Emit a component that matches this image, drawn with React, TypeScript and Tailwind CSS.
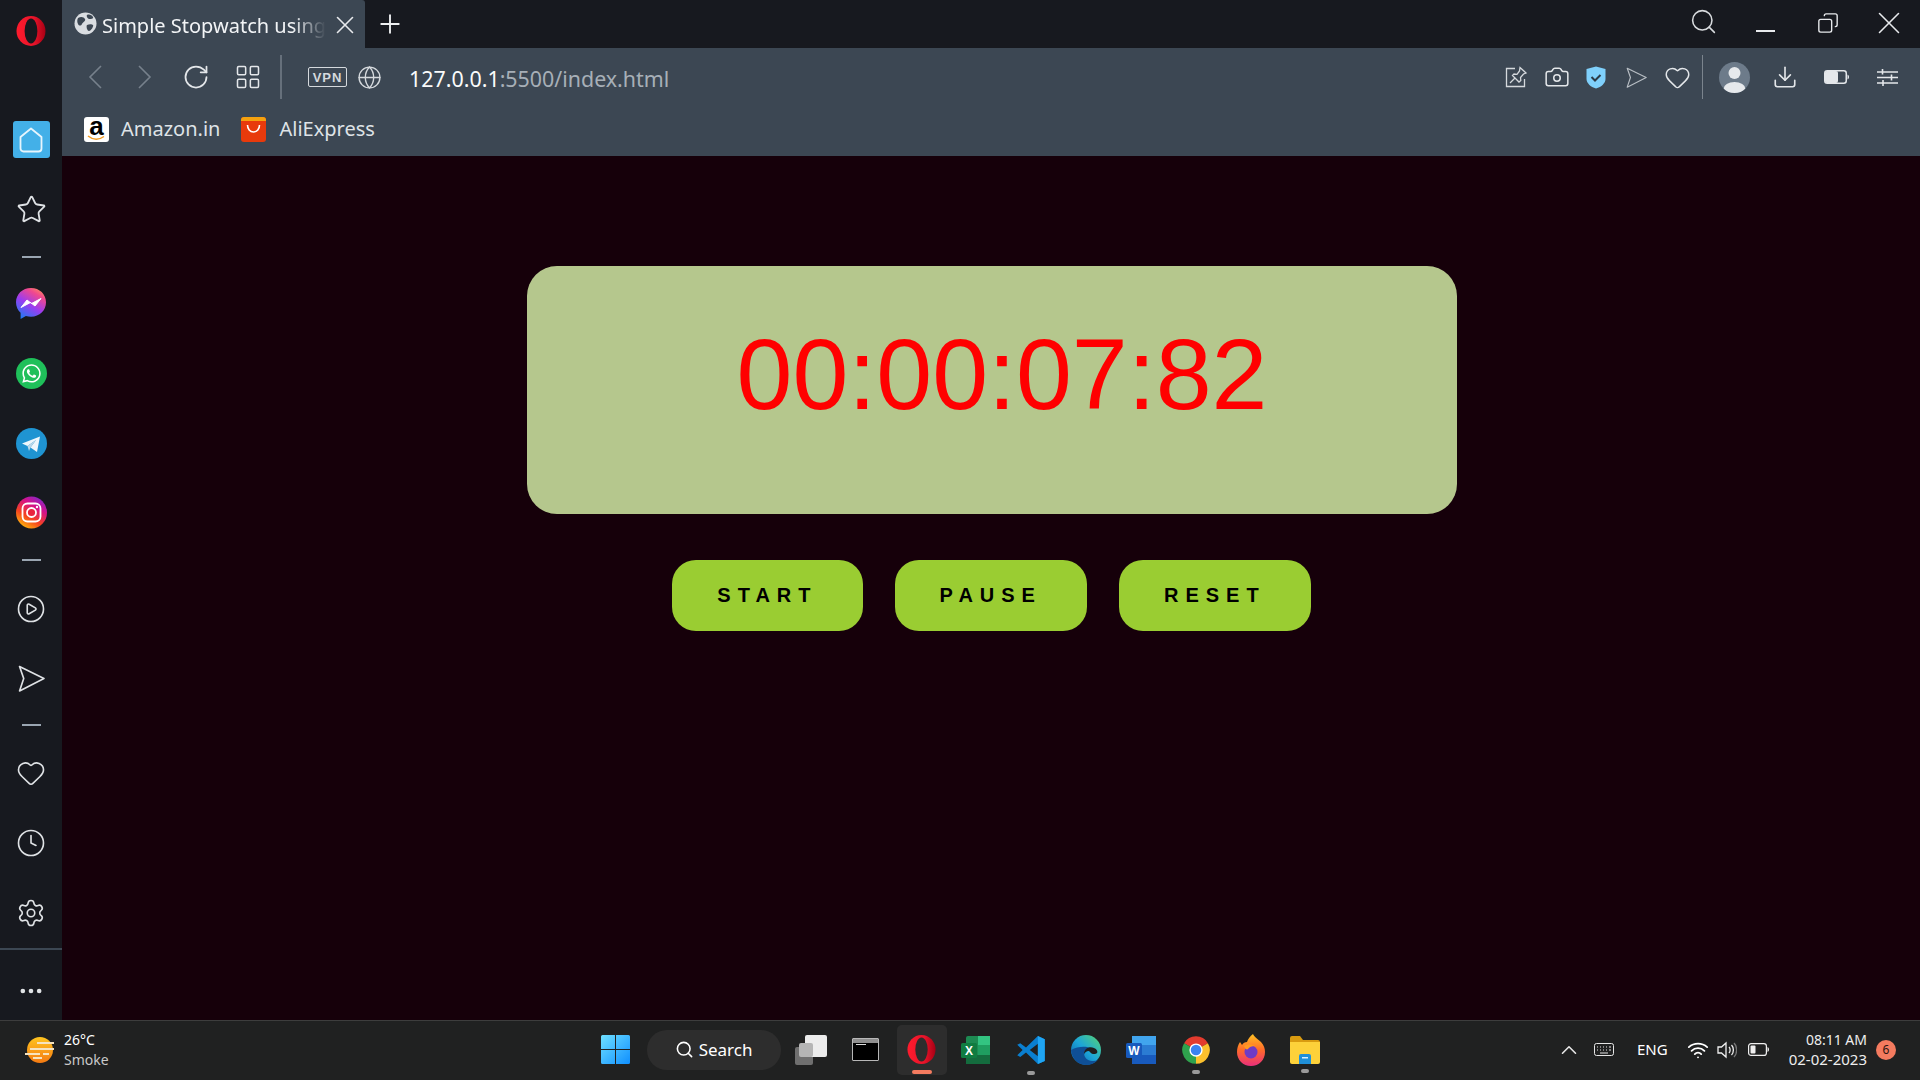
import {
  Camera,
  ChevronUp,
  CirclePlay,
  Clock,
  Copy,
  Download,
  Ellipsis,
  Globe,
  Heart,
  LayoutGrid,
  Plus,
  RotateCw,
  Search,
  Settings,
  Star,
  Wifi,
  X,
} from "lucide-react";
import { FaWhatsapp } from "react-icons/fa";

function OperaLogo({ size = 30, hole = "#17191f" }: { size?: number; hole?: string }) {
  return (
    <svg width={size} height={size} viewBox="0 0 30 30">
      <defs>
        <linearGradient id={`op-${size}`} x1="0" x2="1" y1="0" y2="0">
          <stop offset="0" stopColor="#ff1b2d" />
          <stop offset="0.6" stopColor="#e8142a" />
          <stop offset="1" stopColor="#a70014" />
        </linearGradient>
      </defs>
      <ellipse cx="15" cy="15" rx="14.5" ry="15" fill={`url(#op-${size})`} />
      <ellipse cx="15" cy="15" rx="6.4" ry="12.4" fill={hole} />
    </svg>
  );
}

function SendOutline({ size = 26, color = "#d8dce0", stroke = 1.6 }: { size?: number; color?: string; stroke?: number }) {
  return (
    <svg width={size} height={size} viewBox="0 0 26 26" fill="none" stroke={color} strokeWidth={stroke} strokeLinejoin="round">
      <path d="M1.5 1.5 25 13 1.5 25 5.5 13z" />
    </svg>
  );
}

function Separator() {
  return <div className="h-[2px] w-[19px] shrink-0 bg-[#9aa5b1]" />;
}

function Messenger() {
  return (
    <svg width="32" height="33" viewBox="0 0 32 33">
      <defs>
        <linearGradient id="msg" x1="0.2" x2="0.8" y1="1" y2="0">
          <stop offset="0" stopColor="#1c7cf5" />
          <stop offset="0.45" stopColor="#9b3cf0" />
          <stop offset="0.8" stopColor="#f0488f" />
          <stop offset="1" stopColor="#fd8a5e" />
        </linearGradient>
      </defs>
      <path d="M16 1C7.4 1 1 7.2 1 15.3c0 4.3 1.8 8 4.6 10.500V32l5.300-2.900C12.500 29.600 14.200 29.800 16 29.800c8.600 0 15-6.400 15-14.500S24.600 1 16 1z" fill="url(#msg)" />
      <path d="M6 20.500 12 13l4.500 3.500L26 11.500 20 19l-4.500-3.500z" fill="#fff" stroke="#fff" strokeWidth="1" strokeLinejoin="round" />
    </svg>
  );
}

function WhatsApp() {
  return (
    <div className="flex size-[31px] items-center justify-center rounded-full bg-[#1fc05a]">
      <FaWhatsapp className="size-[21px] text-white" />
    </div>
  );
}

function Telegram() {
  return (
    <svg width="31" height="31" viewBox="0 0 31 31">
      <circle cx="15.500" cy="15.500" r="15.500" fill="#1f94d2" />
      <path d="M6 15.500 24 8.500 21 24 14.500 19.500 20 12 11.500 18z" fill="#eef7fc" />
      <path d="M11.500 18 20 12 14.500 19.500 13 23z" fill="#bcd9ea" />
    </svg>
  );
}

function Instagram() {
  return (
    <svg width="31" height="33" viewBox="0 0 31 33">
      <defs>
        <linearGradient id="ig" x1="0.2" x2="0.8" y1="1" y2="0">
          <stop offset="0" stopColor="#fdc30a" />
          <stop offset="0.35" stopColor="#f5431f" />
          <stop offset="0.7" stopColor="#d4118c" />
          <stop offset="1" stopColor="#7b2bd0" />
        </linearGradient>
      </defs>
      <ellipse cx="15.500" cy="16.500" rx="15.500" ry="16" fill="url(#ig)" />
      <rect x="6.500" y="7.500" width="18" height="18" rx="5" fill="none" stroke="#fff" strokeWidth="1.800" />
      <circle cx="15.500" cy="16.500" r="4.500" fill="#e9243f" stroke="#fff" strokeWidth="1.800" />
      <circle cx="21" cy="11" r="1.200" fill="#fff" />
    </svg>
  );
}

function Sidebar() {
  const icon = "size-[30px] text-[#dfe2e5]";
  return (
    <aside className="flex w-[62px] shrink-0 flex-col items-center bg-[#17191f]">
      <div className="mt-4">
        <OperaLogo />
      </div>
      <div className="mt-[75px] flex size-[37px] items-center justify-center rounded-[3px] bg-[#43b0e8]">
        <svg width="24" height="26" viewBox="0 0 24 26" fill="none" stroke="#e6f5fd" strokeWidth="1.800" strokeLinejoin="round">
          <path d="M12 1.500 22.500 10v11.500a3 3 0 0 1-3 3h-15a3 3 0 0 1-3-3V10z" />
        </svg>
      </div>
      <div className="mt-[33px] flex size-[37px] items-center justify-center">
        <Star className="size-[31px] text-[#dfe2e5]" strokeWidth={1.400} />
      </div>
      <div className="mt-[28px]">
        <Separator />
      </div>
      <div className="mt-[27px] flex size-[37px] items-center justify-center">
        <Messenger />
      </div>
      <div className="mt-[33px] flex size-[37px] items-center justify-center">
        <WhatsApp />
      </div>
      <div className="mt-[33px] flex size-[37px] items-center justify-center">
        <Telegram />
      </div>
      <div className="mt-[32px] flex size-[37px] items-center justify-center">
        <Instagram />
      </div>
      <div className="mt-[28px]">
        <Separator />
      </div>
      <div className="mt-[29px] flex size-[37px] items-center justify-center">
        <CirclePlay className={icon} strokeWidth={1.300} />
      </div>
      <div className="mt-[33px] flex size-[37px] items-center justify-center">
        <SendOutline size={27} color="#dfe2e5" />
      </div>
      <div className="mt-[27px]">
        <Separator />
      </div>
      <div className="mt-[28px] flex size-[37px] items-center justify-center">
        <Heart className={icon} strokeWidth={1.300} />
      </div>
      <div className="mt-[33px] flex size-[37px] items-center justify-center">
        <Clock className={icon} strokeWidth={1.300} />
      </div>
      <div className="mt-[33px] flex size-[37px] items-center justify-center">
        <Settings className={icon} strokeWidth={1.300} />
      </div>
      <div className="mt-[17px] h-[2px] w-full bg-[#3c4753]" />
      <div className="mt-[27px] flex items-center justify-center">
        <Ellipsis className="size-7 text-[#dfe2e5]" />
      </div>
    </aside>
  );
}

function TitleBar() {
  return (
    <div className="flex h-12 shrink-0 items-center bg-[#17191f]">
      <div className="relative flex h-full w-[303px] items-center rounded-tr-[3px] bg-[#3c4753] pl-[12px]">
        <svg className="-mt-[2px]" width="23" height="23" viewBox="0 0 23 23">
          <circle cx="11.500" cy="11.500" r="11" fill="#d9dde1" />
          <path d="M4 6c3-2 6-1 7 1s-2 3-3 5-3 2-4 0-1-4 0-6zM13 13c2-1 5-1 6 0s-2 6-4 6-3-5-2-6zM13 3c2-1 5 0 6 2s-3 2-4 2-3-3-2-4z" fill="#3c4753" />
        </svg>
        <span className="ml-[5px] mt-[3px] w-[224px] whitespace-nowrap text-[20px] text-[#f2f4f6] [mask-image:linear-gradient(to_right,black_85%,transparent)]">
          Simple Stopwatch using
        </span>
        <X className="absolute left-[268px] top-[10px] size-[30px] text-[#e8eaed]" strokeWidth={1.300} />
      </div>
      <Plus className="ml-[10px] size-[30px] text-[#eef0f2]" strokeWidth={1.500} />
      <div className="ml-auto flex items-center">
        <Search className="-mt-[6px] size-[29px] text-[#d8dbde]" strokeWidth={1.300} />
        <div className="ml-[38px] mt-[14px] h-[2px] w-[19px] bg-[#e8eaed]" />
        <Copy className="-mt-[2px] ml-[42px] size-[22px] -scale-x-100 text-[#e8eaed]" strokeWidth={1.500} />
        <X className="-mt-[2px] ml-[31px] mr-[12px] size-[38px] text-[#e8eaed]" strokeWidth={1} />
      </div>
    </div>
  );
}

function Toolbar() {
  const icon = "text-[#e4e7ea]";
  return (
    <div className="flex h-[58px] shrink-0 items-center text-[#e4e7ea]">
      <svg className="ml-[26px]" width="14" height="24" viewBox="0 0 14 24" fill="none" stroke="#77818c" strokeWidth="1.600">
        <path d="M13 1 2 12l11 11" />
      </svg>
      <svg className="ml-[36px]" width="14" height="24" viewBox="0 0 14 24" fill="none" stroke="#77818c" strokeWidth="1.600">
        <path d="M1 1l11 11L1 23" />
      </svg>
      <RotateCw className={`ml-[30px] size-[28px] ${icon}`} strokeWidth={1.500} />
      <LayoutGrid className={`ml-[24px] size-[28px] ${icon}`} strokeWidth={1.300} />
      <div className="ml-[18px] h-[44px] w-[2px] bg-[#66707b]" />
      <div className="ml-[26px] flex h-[20px] w-[39px] items-center justify-center rounded-[2px] border border-[#d5d9dd] font-['Liberation_Sans',sans-serif] text-[13px] font-bold leading-none tracking-[1px] text-[#d5d9dd]">
        VPN
      </div>
      <Globe className="ml-[10px] size-[25px] text-[#d5d9dd]" strokeWidth={1.300} />
      <div className="ml-[27px] mt-[5px] text-[21.4px] text-[#fafbfb]">
        127.0.0.1<span className="text-[#a7afb7]">:5500/index.html</span>
      </div>
      <div className="ml-auto flex items-center">
        <svg width="22" height="22" viewBox="0 0 22 22" fill="none" stroke="#d5d9dd" strokeWidth="1.300">
          <path d="M10 2.500H1.500v18h18V13" />
          <path d="M15 1.500 21 7l-2.500 1-3 3.500.3 3L14 16 7.500 9.500 9 8l3 .3L14.500 5z" />
          <path d="M10 12 5 17" />
        </svg>
        <Camera className="ml-[17px] size-[26px] text-[#e4e7ea]" strokeWidth={1.400} />
        <svg className="ml-[16px]" width="20" height="23" viewBox="0 0 20 23">
          <path d="M10 .5 19.500 3v10c0 4-4 8-9.500 9.500C4.500 21 .5 17 .5 13V3z" fill="#7fd0fb" />
          <path d="M5.500 11 9 14.500l5.500-5.500" fill="none" stroke="#2c3a46" strokeWidth="2" />
        </svg>
        <div className="ml-[20px]">
          <SendOutline size={21} color="#b9bfc5" stroke={1.400} />
        </div>
        <Heart className="ml-[17px] size-[27px] text-[#e4e7ea]" strokeWidth={1.300} />
        <div className="ml-[11px] h-[44px] w-[1px] bg-[#7b848d]" />
        <svg className="ml-[16px]" width="31" height="31" viewBox="0 0 31 31">
          <defs>
            <clipPath id="avatar">
              <circle cx="15.500" cy="15.500" r="15.500" />
            </clipPath>
          </defs>
          <circle cx="15.500" cy="15.500" r="15.500" fill="#6d7b8a" />
          <g clipPath="url(#avatar)" fill="#e6e9ec">
            <circle cx="15.500" cy="11" r="6" />
            <ellipse cx="15.500" cy="27" rx="11" ry="7" />
          </g>
        </svg>
        <Download className="ml-[22px] size-[26px] text-[#e4e7ea]" strokeWidth={1.500} />
        <svg className="ml-[26px]" width="25" height="14" viewBox="0 0 25 14">
          <rect x=".750" y=".750" width="21.500" height="12.500" rx="2.500" fill="none" stroke="#e4e7ea" strokeWidth="1.500" />
          <rect x="1" y="1" width="13" height="12" rx="2" fill="#e4e7ea" />
          <path d="M23.500 4.500c1 .5 1.500 1.500 1.500 2.500s-.5 2-1.500 2.500z" fill="#e4e7ea" />
        </svg>
        <svg className="ml-[28px] mr-[22px]" width="21" height="17" viewBox="0 0 21 17" fill="none" stroke="#e4e7ea" strokeWidth="1.600">
          <path d="M0 3h21M0 8.500h21M0 14h21M5.500 0v5.500M14.500 5.500v6M6 11v6" />
        </svg>
      </div>
    </div>
  );
}

function Bookmarks() {
  return (
    <div className="flex h-[50px] shrink-0 items-center pb-1 pl-[22px] text-[20px] text-[#dfe3e7]">
      <div className="relative size-[25px] rounded-[3px] bg-white">
        <span className="absolute inset-x-0 -top-[3px] text-center font-['Liberation_Sans',sans-serif] text-[26px] font-bold leading-[24px] text-black">
          a
        </span>
        <svg className="absolute bottom-[1px] left-[3px]" width="19" height="6" viewBox="0 0 19 6" fill="none" stroke="#f29a1f" strokeWidth="1.500">
          <path d="M1 1c5 4 11 4 16 .5" />
        </svg>
      </div>
      <span className="ml-[12px]">Amazon.in</span>
      <div className="ml-[21px] flex size-[25px] flex-col overflow-hidden rounded-[3px] bg-[#e83a0c]">
        <div className="h-[4px] bg-[#f5a20f]" />
        <svg className="ml-[5px] mt-[3px]" width="15" height="9" viewBox="0 0 15 9" fill="none" stroke="#fff" strokeWidth="1.600">
          <path d="M1.500 1c0 4 2.500 7 6 7s6-3 6-7" />
        </svg>
      </div>
      <span className="ml-[13px]">AliExpress</span>
    </div>
  );
}

function Stopwatch() {
  return (
    <main className="flex flex-1 flex-col items-center bg-[#16000a] font-['Liberation_Sans',sans-serif]">
      <div className="ml-[2px] mt-[110px] h-[248px] w-[930px] rounded-[30px] bg-[#b5c78d] pl-[20px] pt-[58px] text-center text-[100.5px] leading-none text-[#ff0000]">
        00:00:07:82
      </div>
      <div className="ml-[1px] mt-[46px] flex gap-[32px]">
        {["START", "PAUSE", "RESET"].map((label) => (
          <button
            key={label}
            className="h-[71px] rounded-[24px] bg-[#9acd32] px-[45px] pb-[2px] text-[20px] font-bold tracking-[7px] text-black"
          >
            {label}
          </button>
        ))}
      </div>
    </main>
  );
}

function Running({ className, children }: { className: string; children: React.ReactNode }) {
  return (
    <div className={`relative flex w-[30px] items-center justify-center ${className}`}>
      {children}
      <div className="absolute -bottom-[9px] h-[4px] w-[8px] rounded-full bg-[#9a9a9a]" />
    </div>
  );
}

function TaskIcons() {
  return (
    <div className="flex items-center">
      {/* task view */}
      <div className="relative h-[30px] w-[32px]">
        <div className="absolute bottom-0 left-0 size-[18px] rounded-[2px] bg-[#6f6f6f]" />
        <div className="absolute right-0 top-0 size-[22px] rounded-[2px] bg-[#ececec]" />
        <div className="absolute left-[4px] top-[8px] size-[14px] rounded-[2px] bg-[#b5b5b5]" />
      </div>
      {/* terminal */}
      <div className="ml-[25px] h-[23px] w-[27px] rounded-[1px] border border-[#b8b8b8] bg-black">
        <div className="h-[4px] w-full bg-[#8f8f8f]" />
        <div className="ml-[3px] mt-[1px] h-[1px] w-[10px] bg-[#dddddd]" />
      </div>
      {/* opera, active */}
      <div className="relative ml-[18px] flex h-[50px] w-[50px] items-center justify-center rounded-[5px] bg-[#2d2d2d]">
        <OperaLogo size={29} hole="#2d2d2d" />
        <div className="absolute bottom-[1px] h-[4px] w-[20px] rounded-full bg-[#f47b5f]" />
      </div>
      {/* excel */}
      <svg className="ml-[14px]" width="30" height="30" viewBox="0 0 30 30">
        <rect x="5" y="1" width="24" height="28" rx="2" fill="#1d8a52" />
        <rect x="17" y="1" width="12" height="9" fill="#33c481" />
        <rect x="17" y="10" width="12" height="10" fill="#1f9e60" />
        <rect x="5" y="20" width="24" height="9" fill="#146c3e" />
        <rect x="0" y="8" width="16" height="15" rx="1.500" fill="#107c41" />
        <text x="8" y="20" textAnchor="middle" fontFamily="Liberation Sans" fontWeight="700" fontSize="12" fill="#fff">X</text>
      </svg>
      {/* vscode */}
      <Running className="ml-[25px]">
        <svg width="30" height="32" viewBox="0 0 24 24">
          <path fillRule="evenodd" d="M17.500 .8 8 10 3.400 6.500 1 7.800 5.300 12 1 16.200l2.400 1.300L8 14l9.500 9.200 5.500-2.500V3.300zM17.500 7v10L11 12z" fill="#0a7fd0" />
          <path d="M17.500 .8 23 3.300v17.400l-5.500 2.500z" fill="#1fa5f3" />
        </svg>
      </Running>
      {/* edge */}
      <svg className="ml-[25px]" width="30" height="30" viewBox="0 0 30 30">
        <defs>
          <linearGradient id="edge" x1="0" x2="1" y1="1" y2="0">
            <stop offset="0" stopColor="#0c59a4" />
            <stop offset="0.5" stopColor="#1ca5d8" />
            <stop offset="1" stopColor="#58d66f" />
          </linearGradient>
        </defs>
        <circle cx="15" cy="15" r="15" fill="url(#edge)" />
        <path d="M0 15C1 24 8 30 15 30c5 0 9-2 12-5-5 2-11 1-13-3s0-8 5-9c-4-2-12-2-19 2z" fill="#0f4f96" />
        <path d="M13 19c0-5 5-8 10-6 3 1 4 4 3 5-2 2-6 1-7-1s-4-1-6 2z" fill="#1f1f1f" />
      </svg>
      {/* word */}
      <svg className="ml-[25px]" width="30" height="30" viewBox="0 0 30 30">
        <rect x="6" y="1" width="24" height="28" rx="2" fill="#2b7cd3" />
        <rect x="6" y="1" width="24" height="9" fill="#41a5ee" />
        <rect x="6" y="20" width="24" height="9" fill="#185abd" />
        <rect x="0" y="8" width="16" height="15" rx="1.500" fill="#185abd" />
        <text x="8" y="20" textAnchor="middle" fontFamily="Liberation Sans" fontWeight="700" fontSize="12" fill="#fff">W</text>
      </svg>
      {/* chrome */}
      <Running className="ml-[25px]">
        <svg width="30" height="30" viewBox="0 0 24 24">
          <path d="M12 12 2.470 6.500A11 11 0 0 1 21.530 6.500z" fill="#e33b2e" />
          <path d="M12 12 21.530 6.500A11 11 0 0 1 12 23z" fill="#fbc02d" />
          <path d="M12 12V23A11 11 0 0 1 2.470 6.500z" fill="#2fa24d" />
          <circle cx="12" cy="12" r="5.300" fill="#fff" />
          <circle cx="12" cy="12" r="4.200" fill="#3b82f0" />
        </svg>
      </Running>
      {/* firefox */}
      <svg className="ml-[26px]" width="28" height="32" viewBox="0 0 28 32">
        <defs>
          <linearGradient id="fx" x1="0.5" x2="0.5" y1="0" y2="1">
            <stop offset="0" stopColor="#ffc222" />
            <stop offset="0.5" stopColor="#ff6a2b" />
            <stop offset="1" stopColor="#ea2f7b" />
          </linearGradient>
        </defs>
        <path d="M16 0c1 3 5 5 8 8 3 3 4 7 4 10 0 8-6 14-14 14S0 26 0 18c0-4 1-7 3-10l2 3c1-2 3-3 5-3 1-3 3-6 6-8z" fill="url(#fx)" />
        <circle cx="14" cy="18" r="6.500" fill="#6f3bc6" />
        <path d="M7 12c3-2 8-2 11 0-3 0-6 1-7 3-1 1-3 0-4-3z" fill="#ff9a22" />
      </svg>
      {/* explorer */}
      <Running className="ml-[25px]">
        <svg width="30" height="28" viewBox="0 0 30 28">
          <path d="M0 2a2 2 0 0 1 2-2h8l3 4h15a2 2 0 0 1 2 2v3H0z" fill="#d99b10" />
          <path d="M0 6h30v20a2 2 0 0 1-2 2H2a2 2 0 0 1-2-2z" fill="#fdd13a" />
          <path d="M9 20a2 2 0 0 1 2-2h8a2 2 0 0 1 2 2v8H9z" fill="#1f8fd8" />
          <rect x="12" y="21" width="6" height="1.500" fill="#d6efff" />
        </svg>
      </Running>
    </div>
  );
}

function Taskbar() {
  return (
    <footer className="relative flex h-[60px] shrink-0 items-center border-t border-[#3d3d3d] bg-[#202121] pb-[2px] text-white">
      <svg className="ml-[25px]" width="30" height="26" viewBox="0 0 30 26">
        <defs>
          <linearGradient id="sun" x1="0.5" x2="0.5" y1="0" y2="1">
            <stop offset="0" stopColor="#ffc51f" />
            <stop offset="1" stopColor="#f47a12" />
          </linearGradient>
        </defs>
        <ellipse cx="15" cy="13" rx="13" ry="13" fill="url(#sun)" />
        <g stroke="#f6e3bf" strokeWidth="1.800">
          <path d="M12 6h17M5 12h24M0 17h15M18 17h6M8 21h9" />
        </g>
      </svg>
      <div className="ml-[9px] flex flex-col text-[14px] leading-[20px]">
        <span>26°C</span>
        <span className="text-[#c9c9c9]">Smoke</span>
      </div>
      <svg className="ml-[492px]" width="29" height="29" viewBox="0 0 29 29">
        <defs>
          <linearGradient id="win" x1="0" x2="1" y1="0" y2="1">
            <stop offset="0" stopColor="#6fe0ff" />
            <stop offset="1" stopColor="#0f8fff" />
          </linearGradient>
        </defs>
        <path d="M0 1.500A1.500 1.500 0 0 1 1.500 0H14v14H0zM15 0h12.500A1.500 1.500 0 0 1 29 1.500V14H15zM0 15h14v14H1.500A1.500 1.500 0 0 1 0 27.500zM15 15h14v12.500a1.500 1.500 0 0 1-1.500 1.500H15z" fill="url(#win)" />
      </svg>
      <div className="ml-[17px] flex h-10 w-[134px] items-center rounded-full bg-[#2d2d2d] pl-[28px]">
        <Search className="size-[19px] text-white" strokeWidth={2} />
        <span className="ml-[5px] text-[17px]">Search</span>
      </div>
      <div className="ml-[14px]">
        <TaskIcons />
      </div>
      <div className="ml-auto flex items-center">
        <ChevronUp className="size-[26px] text-[#e6e6e6]" strokeWidth={1.500} />
        <svg className="ml-[12px]" width="20" height="13" viewBox="0 0 20 13" fill="none" stroke="#e6e6e6" strokeWidth="1">
          <rect x=".500" y=".500" width="19" height="12" rx="2" />
          <path d="M3 4h1M6 4h1M9 4h1M12 4h1M15 4h2M3 7h1M6 7h1M9 7h1M12 7h1M15 7h2M6 10h8" />
        </svg>
        <span className="ml-[23px] text-[15px]">ENG</span>
        <Wifi className="ml-[19px] size-[22px] text-white" strokeWidth={2} />
        <svg className="ml-[8px]" width="20" height="18" viewBox="0 0 20 18" fill="none" stroke="#f0f0f0" strokeWidth="1.300">
          <path d="M1 6h3.500L9 2v14l-4.500-4H1z" />
          <path d="M12 6c1.500 1.500 1.500 4.500 0 6M14.500 4c2.500 2.500 2.500 7.500 0 10" />
          <path d="M17 2c3.500 3.500 3.500 10.500 0 14" stroke="#777" />
        </svg>
        <svg className="ml-[11px]" width="21" height="13" viewBox="0 0 21 13">
          <rect x=".600" y=".600" width="17.800" height="11.800" rx="2.500" fill="none" stroke="#f0f0f0" strokeWidth="1.200" />
          <rect x="2.500" y="2.500" width="5" height="8" rx="1" fill="#f0f0f0" />
          <path d="M19.500 4c1 .5 1.500 1.500 1.500 2.500S20.500 8.500 19.500 9z" fill="#f0f0f0" />
        </svg>
        <div className="ml-[20px] flex flex-col items-end leading-[20px] text-[#eeeeee]">
          <span className="text-[14px]">08:11 AM</span>
          <span className="-mt-[1px] text-[15px]">02-02-2023</span>
        </div>
        <div className="ml-[9px] mr-[24px] flex size-5 items-center justify-center rounded-full bg-[#f47b5f] text-[12px] text-[#2a1410]">
          6
        </div>
      </div>
    </footer>
  );
}

export default function App() {
  return (
    <div className="flex h-screen w-screen flex-col overflow-hidden font-['Noto_Sans',sans-serif]">
      <div className="flex min-h-0 flex-1">
        <Sidebar />
        <div className="flex min-w-0 flex-1 flex-col">
          <div className="shrink-0 bg-[#3c4753]">
            <TitleBar />
            <Toolbar />
            <Bookmarks />
          </div>
          <Stopwatch />
        </div>
      </div>
      <Taskbar />
    </div>
  );
}
